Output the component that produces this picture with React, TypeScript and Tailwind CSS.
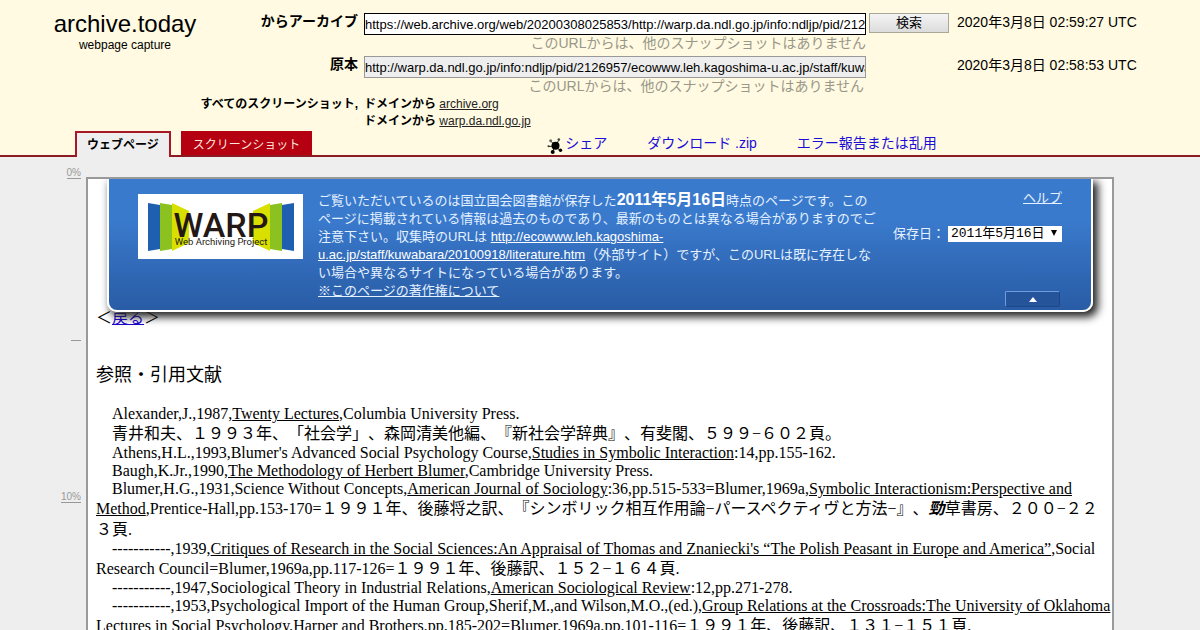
import React from "react";

const sans = "font-['Liberation_Sans','Noto_Sans_CJK_JP',sans-serif]";
const serif = "font-['Liberation_Serif','Noto_Sans_CJK_JP',serif]";

function Jp({ children }: { children: React.ReactNode }) {
  return <span className="leading-[21px]">{children}</span>;
}

function Entry({ children }: { children: React.ReactNode }) {
  return <p className="indent-4">{children}</p>;
}

function ShareIcon() {
  return (
    <svg viewBox="0 0 16 17" className="mt-[6px] h-[17px] w-4" aria-hidden="true">
      <g stroke="#222" strokeWidth="1">
        <path d="M8 9 3.500 3.500M8 9 12 3M8 9 1.500 9.500M8 9 5.500 15M8 9 13 13.500" />
      </g>
      <circle cx="8.500" cy="8.800" r="4" fill="#000" />
      <circle cx="3.700" cy="3.700" r="1.500" fill="#666" />
      <circle cx="11.800" cy="2.500" r="1.300" fill="#444" />
      <circle cx="1.500" cy="9.300" r="1" fill="#333" />
      <circle cx="5.700" cy="15" r="2" fill="#000" />
      <circle cx="13.500" cy="13.300" r="1.700" fill="#000" />
    </svg>
  );
}

function WarpLogo() {
  return (
    <svg viewBox="0 0 165 65" className="mt-[5px] h-[65px] w-[165px] shrink-0 bg-white" role="img" aria-label="WARP">
      <path d="M10 9 22 11V55L10 57ZM156 9 144 11V55L156 57Z" fill="#1f5fb0" />
      <path d="M22 9 34 11V55L22 57ZM144 9 132 11V55L144 57Z" fill="#8cc21f" />
      <path d="M34 9 51 17V49L34 57ZM132 9 115 17V49L132 57Z" fill="#d9e000" />
      <text x="83" y="43" textAnchor="middle" fontFamily="Roboto" fontWeight="500" fontSize="34" fill="#231815">
        WARP
      </text>
      <text x="83" y="51" textAnchor="middle" fontFamily="Roboto" fontWeight="400" fontSize="9.500" fill="#231815">
        Web Archiving Project
      </text>
    </svg>
  );
}

function Header() {
  return (
    <header className="border-b-2 border-[#8c1a22] bg-[#fffae1]">
      <div className="grid grid-cols-[250px_108px_minmax(0,1fr)_80px_251px] pt-[13px]">
        <div className="row-span-2 text-center">
          <h1 className="text-[24px] leading-[22px]">archive.today</h1>
          <p className="text-[12px] leading-[20px]">webpage capture</p>
        </div>
        <label htmlFor="from" className="text-right text-[14px] leading-[17px] font-bold">からアーカイブ</label>
        <div className="mr-[3px] ml-[6px] h-[43px]">
          <input
            id="from"
            className="block h-[22px] w-full border border-black bg-white text-[13px]"
            defaultValue="https://web.archive.org/web/20200308025853/http://warp.da.ndl.go.jp/info:ndljp/pid/2126957/ecowww.leh.kagoshima-u.ac.jp/staff/kuwabara/20100918/literature.htm"
          />
          <p className="text-right text-[14px] leading-[17px] text-[#999789]">このURLからは、他のスナップショットはありません</p>
        </div>
        <button
          type="button"
          className="h-5 border border-[#a9a799] bg-linear-to-b from-[#f4f4f4] to-[#dcdcdc] text-[13px] leading-[18px]"
        >
          検索
        </button>
        <time className="pl-2 text-[14px] leading-[18px]">2020年3月8日 02:59:27 UTC</time>

        <label htmlFor="orig" className="text-right text-[14px] leading-[17px] font-bold">原本</label>
        <div className="mr-[3px] ml-[6px] h-10">
          <input
            id="orig"
            readOnly
            className="block h-[22px] w-full border border-[#999] bg-[#eeeeee] text-[13px]"
            defaultValue="http://warp.da.ndl.go.jp/info:ndljp/pid/2126957/ecowww.leh.kagoshima-u.ac.jp/staff/kuwabara/20100918/literature.htm"
          />
          <p className="pr-0.5 text-right text-[14px] leading-[17px] text-[#999789]">このURLからは、他のスナップショットはありません</p>
        </div>
        <time className="col-start-5 pl-2 text-[14px] leading-[18px]">2020年3月8日 02:58:53 UTC</time>

        <p className="col-span-2 text-right text-[12px] leading-[17px] font-bold">すべてのスクリーンショット,</p>
        <ul className="col-span-3 pl-[6px] text-[12px] leading-[17px]">
          <li>
            <b>ドメインから</b> <a href="#archive" className="text-[#222] underline">archive.org</a>
          </li>
          <li>
            <b>ドメインから</b> <a href="#warp" className="text-[#222] underline">warp.da.ndl.go.jp</a>
          </li>
        </ul>
      </div>
      <nav className="mt-px flex h-6 items-start pl-[75px]">
        <a href="#web" className="relative z-10 h-[26px] border-2 border-b-0 border-[#a81824] bg-[#eeeeee] px-[10px] text-[12px] leading-[24px] font-bold">
          ウェブページ
        </a>
        <a href="#shot" className="ml-[10px] h-6 bg-[#b40010] px-3 text-[12px] leading-[28px] text-[#ffe6dc]">
          スクリーンショット
        </a>
        <div className="ml-[235px] flex gap-10 text-[14px] leading-[24px] text-[#1a0dd8]">
          <a href="#share" className="flex gap-0.5 text-[#1a0dd8]"><ShareIcon />シェア</a>
          <a href="#zip">ダウンロード .zip</a>
          <a href="#abuse">エラー報告または乱用</a>
        </div>
      </nav>
    </header>
  );
}

function Banner() {
  return (
    <section className="relative z-10 mx-[19px] flex rounded-b-[10px] border-2 border-t-0 border-white bg-linear-to-b from-[#3a7acd] from-30% to-[#295ca5] px-[29px] pt-[10px] pb-[10px] text-[13px] leading-[18px] text-[#e4f1ff] shadow-[4px_4px_9px_1px_#222]">
      <WarpLogo />
      <p className={`${sans} mt-[2px] ml-[15px] min-w-0 flex-1`}>
        ご覧いただいているのは国立国会図書館が保存した<b className="text-[16px] leading-[18px] text-white">2011年5月16日</b>時点のページです。このページに掲載されている情報は過去のものであり、最新のものとは異なる場合がありますのでご注意下さい。収集時のURLは{" "}
        <a href="#source" className="text-white underline">http://ecowww.leh.kagoshima-u.ac.jp/staff/kuwabara/20100918/literature.htm</a>
        （外部サイト）ですが、このURLは既に存在しない場合や異なるサイトになっている場合があります。
        <br />
        <a href="#rights" className="underline">※このページの著作権について</a>
      </p>
      <div className="ml-[15px] flex w-[169px] shrink-0 flex-col items-end">
        <a href="#help" className="underline">ヘルプ</a>
        <div className="mt-[18px] flex w-full items-center justify-between">
          <label htmlFor="saved">保存日：</label>
          <div className="relative h-4 w-[114px]">
            <select
              id="saved"
              className="block h-4 w-full appearance-none bg-white pl-[3px] font-['Liberation_Mono','Noto_Sans_CJK_JP',monospace] text-[13px] leading-4 text-black"
            >
              <option>2011年5月16日</option>
            </select>
            <svg viewBox="0 0 6 6" className="pointer-events-none absolute top-1 right-[5px] size-[6px]" aria-hidden="true">
              <path d="M0 0H6L3 6Z" fill="#000" />
            </svg>
          </div>
        </div>
        <button
          type="button"
          aria-label="閉じる"
          className="mt-auto mr-0.5 mb-[-7px] flex h-4 w-[55px] items-center justify-center rounded-xs border border-t-[#6f9be0] border-r-[#1d4689] border-b-[#1d4689] border-l-[#6f9be0] bg-[#26549b]"
        >
          <svg viewBox="0 0 8 5" className="h-[5px] w-2" aria-hidden="true">
            <path d="M4 0 8 5H0Z" fill="#fff" />
          </svg>
        </button>
      </div>
    </section>
  );
}

function Ruler() {
  return (
    <aside className="w-[86px] shrink-0 pr-[5px] text-right text-[10px] leading-[10px] text-[#999]">
      <div className="flex h-[22px] items-end justify-end">
        <a href="#p0" className="border-b border-[#999]">0%</a>
      </div>
      <div className="flex h-[162px] items-end justify-end">
        <a href="#p5" aria-label="5%" className="w-[10px] border-b border-[#999]" />
      </div>
      <div className="flex h-[162px] items-end justify-end">
        <a href="#p10" className="border-b border-[#999]">10%</a>
      </div>
    </aside>
  );
}

function Article() {
  return (
    <article className={`${serif} -mt-[3px] pl-2 text-[16px] leading-[18px] [text-spacing-trim:space-all]`}>
      <p>＜<a href="#back" className="text-[#1a00d0] underline">戻る</a>＞</p>
      <h2 className="mt-[36px] mb-[17px] text-[18px] leading-[25px]">参照・引用文献</h2>
      <Entry>Alexander,J.,1987,<u>Twenty Lectures</u>,Columbia University Press.</Entry>
      <Entry><Jp>青井和夫、１９９３年、「社会学」、森岡清美他編、『新社会学辞典』、有斐閣、５９９−６０２頁。</Jp></Entry>
      <Entry>Athens,H.L.,1993,Blumer's Advanced Social Psychology Course,<u>Studies in Symbolic Interaction</u>:14,pp.155-162.</Entry>
      <Entry>Baugh,K.Jr.,1990,<u>The Methodology of Herbert Blumer</u>,Cambridge University Press.</Entry>
      <Entry>
        Blumer,H.G.,1931,Science Without Concepts,<u>American Journal of Sociology</u>:36,pp.515-533=Blumer,1969a,<u>Symbolic Interactionism:Perspective and Method</u>,Prentice-Hall,pp.153-170=<Jp>１９９１年、後藤将之訳、『シンボリック相互作用論−パースペクティヴと方法−』、<b><i>勁</i></b>草書房、２００−２２３頁.</Jp>
      </Entry>
      <Entry>
        -----------,1939,<u>Critiques of Research in the Social Sciences:An Appraisal of Thomas and Znaniecki's “The Polish Peasant in Europe and America”</u>,Social Research Council=Blumer,1969a,pp.117-126=<Jp>１９９１年、後藤訳、１５２−１６４頁.</Jp>
      </Entry>
      <Entry>-----------,1947,Sociological Theory in Industrial Relations,<u>American Sociological Review</u>:12,pp.271-278.</Entry>
      <Entry>
        -----------,1953,Psychological Import of the Human Group,Sherif,M.,and Wilson,M.O.,(ed.),<u>Group Relations at the Crossroads:The University of Oklahoma Lectures in Social Psychology</u>,Harper and Brothers,pp.185-202=Blumer,1969a,pp.101-116=<Jp>１９９１年、後藤訳、１３１−１５１頁.</Jp>
      </Entry>
    </article>
  );
}

export default function App() {
  return (
    <div lang="ja" className={`${sans} flex min-h-screen flex-col bg-[#eeeeee] text-black`}>
      <Header />
      <main className="flex flex-1">
        <Ruler />
        <div className="mt-5 mr-[86px] min-w-0 flex-1 overflow-hidden border-2 border-b-0 border-[#999] bg-white">
          <Banner />
          <Article />
        </div>
      </main>
    </div>
  );
}
